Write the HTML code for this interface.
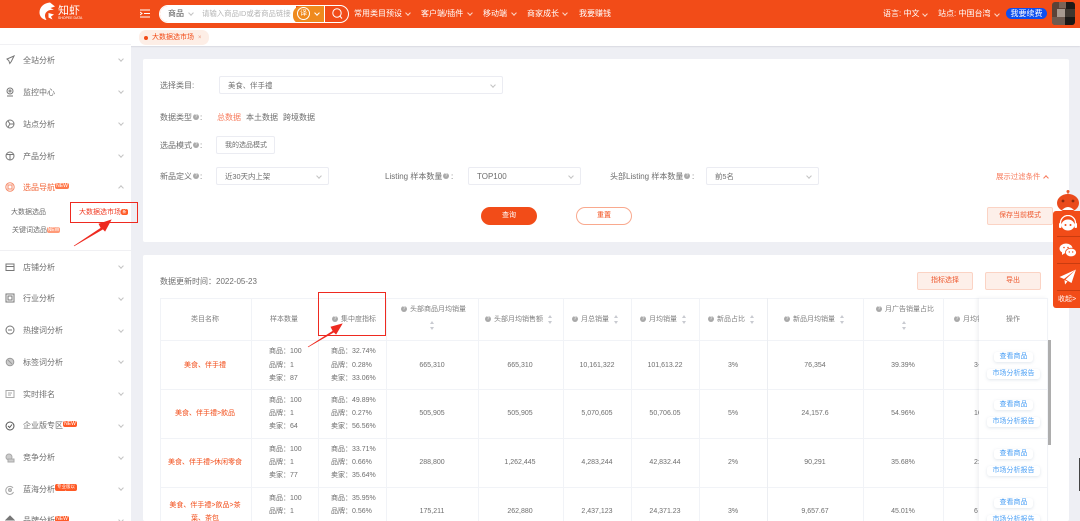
<!DOCTYPE html>
<html lang="zh">
<head>
<meta charset="utf-8">
<title>大数据选市场</title>
<style>
html,body{margin:0;padding:0;width:1080px;height:521px;overflow:hidden;background:#eeeff4}
body{position:relative;font-family:"Liberation Sans","Noto Sans CJK SC",sans-serif;filter:blur(.38px)}
div,span,svg{box-sizing:border-box}
.a{position:absolute}
.t{position:absolute;white-space:nowrap;line-height:10px;font-size:8px;color:#6e6e6e;margin-top:1px}
.f7{font-size:7px}
.f75{font-size:7.4px}
.c{transform:translateX(-50%)}
.w{color:#fff}
.r{color:#f24c18}
.ch{position:absolute;width:4px;height:4px;border-right:1px solid #c4c4c4;border-bottom:1px solid #c4c4c4;transform:rotate(45deg)}
.chw{border-color:#fbd5c6}
.chu{transform:rotate(225deg)}
.sel{position:absolute;background:#fff;border:1px solid #ebecf2;border-radius:2px;height:18px}
.q{position:absolute;width:6px;height:6px;border-radius:50%;background:#a9a9a9;color:#fff;font-size:5px;line-height:6px;text-align:center}
.s{position:absolute;width:5px;height:9px}
.s:before,.s:after{content:"";position:absolute;left:0;border-left:2.5px solid transparent;border-right:2.5px solid transparent}
.s:before{top:0;border-bottom:3px solid #c8cad0}
.s:after{bottom:0;border-top:3px solid #c8cad0}
.vl{position:absolute;top:298px;width:1px;height:223px;background:#f1f3f7}
.hl{position:absolute;left:160px;width:820px;height:1px;background:#f1f3f7}
.h{color:#808080;font-size:7px}
.bg{position:absolute;background:#ff5a26;color:#fff;font-size:5px;line-height:6px;height:6px;border-radius:2px;text-align:center}
.op{position:absolute;background:#fff;border-radius:3px;box-shadow:0 1px 3px rgba(120,140,170,.22);color:#4a9ff5;font-size:7px;line-height:10px;text-align:center;white-space:nowrap}
.ic{position:absolute;left:5px;fill:none;stroke:#777;stroke-width:1}
.btn{position:absolute;height:18px;background:#fdefe9;border:1px solid #fbd3c4;border-radius:2px;color:#ee5a30;font-size:7px;line-height:16px;text-align:center}
</style>
</head>
<body>

<!-- top bar -->
<div class="a" style="left:0;top:0;width:1080px;height:28px;background:#f24c18"></div>
<svg class="a" style="left:38px;top:2px" width="20" height="19" viewBox="0 0 20 19"><path d="M12 .5 C6 1 1.5 5 1.5 10.5 C1.5 14.5 4.5 17.5 8.5 18 C6.5 15 6.5 12 8.5 10 C10 8 13 7.5 16 8 L12.5 6 L17 4.5 Z" fill="#fff"/><path d="M10.5 11 L16 12.5 L13 14.5 L14.5 17.5 L10.5 15.5Z" fill="#fff"/></svg>
<div class="t w" style="left:58px;top:3px;font-size:11px;line-height:14px">知虾</div>
<div class="t w" style="left:58px;top:15px;font-size:3.5px;line-height:5px">SHOPEE DATA</div>
<svg class="a" style="left:140px;top:9px" width="10" height="9" viewBox="0 0 10 9"><path d="M0 1H10M4 4.5H10M0 8H10M0 3L2 4.5L0 6" fill="none" stroke="#fff" stroke-width="1"/></svg>

<div class="a" style="left:159px;top:5px;width:190px;height:18px;border:1px solid #fff;border-radius:9px;overflow:hidden">
  <div class="a" style="left:0;top:0;width:136px;height:18px;background:#fff"></div>
  <div class="a" style="left:133px;top:0;width:31px;height:18px;background:#ef8a1e;border-radius:8px 0 0 8px"></div>
  <div class="a" style="left:164px;top:0;width:1px;height:18px;background:#fff"></div>
</div>
<div class="t" style="left:168px;top:8px;color:#555">商品</div>
<div class="ch" style="left:189px;top:11px"></div>
<div class="t f75" style="left:202px;top:8px;color:#b5b5b5">请输入商品ID或者商品链接</div>
<div class="a" style="left:297px;top:7px;width:13px;height:13px;border:1px solid #fff;border-radius:50%;color:#fff;font-size:7px;line-height:11px;text-align:center">译</div>
<div class="ch chw" style="left:315px;top:11px;border-color:#fff"></div>
<svg class="a" style="left:331px;top:7px" width="13" height="13" viewBox="0 0 13 13"><circle cx="6" cy="6" r="4.2" fill="none" stroke="#fff"/><path d="M9 9.2L11 11.5" stroke="#fff"/></svg>

<div class="t w" style="left:354px;top:8px">常用类目预设</div><div class="ch chw" style="left:406px;top:11px"></div>
<div class="t w" style="left:421px;top:8px">客户端/插件</div><div class="ch chw" style="left:468px;top:11px"></div>
<div class="t w" style="left:483px;top:8px">移动端</div><div class="ch chw" style="left:512px;top:11px"></div>
<div class="t w" style="left:527px;top:8px">商家成长</div><div class="ch chw" style="left:563px;top:11px"></div>
<div class="t w" style="left:579px;top:8px">我要赚钱</div>

<div class="t w" style="left:883px;top:8px">语言: 中文</div><div class="ch chw" style="left:923px;top:12px"></div>
<div class="t w" style="left:938px;top:8px">站点: 中国台湾</div><div class="ch chw" style="left:995px;top:12px"></div>
<div class="a" style="left:1006px;top:8px;width:41px;height:11px;border-radius:6px;background:#0d4ff0;color:#fff;font-size:8px;line-height:11px;text-align:center">我要续费</div>
<div class="a" style="left:1052px;top:2px;width:23px;height:23px;border-radius:3px;background:#5b4338;overflow:hidden">
  <div class="a" style="left:7px;top:0;width:8px;height:6px;background:#7b6357"></div>
  <div class="a" style="left:14px;top:0;width:9px;height:7px;background:#1d1a18"></div>
  <div class="a" style="left:5px;top:7px;width:8px;height:8px;background:#a89a90"></div>
  <div class="a" style="left:13px;top:7px;width:10px;height:8px;background:#3f3730"></div>
  <div class="a" style="left:13px;top:15px;width:10px;height:8px;background:#1b1816"></div>
  <div class="a" style="left:0;top:15px;width:13px;height:8px;background:#6d5a50"></div>
</div>

<!-- tab bar -->
<div class="a" style="left:0;top:28px;width:1080px;height:18px;background:#fff;box-shadow:0 1px 1px #d9dae1"></div>
<div class="a" style="left:139px;top:30px;width:70px;height:15px;border-radius:7px;background:#fdeee6"></div>
<div class="a" style="left:144px;top:36px;width:4px;height:4px;border-radius:50%;background:#f24c18"></div>
<div class="t r f7" style="left:152px;top:32px">大数据选市场</div>
<div class="t" style="left:198px;top:32px;color:#e89b80;font-size:6px">×</div>

<!-- sidebar -->
<div class="a" style="left:0;top:28px;width:131px;height:493px;background:#fff"></div>
<div class="a" style="left:0;top:44px;width:131px;height:1px;background:#f1f1f4"></div>
<div class="a" style="left:0;top:250px;width:131px;height:1px;background:#f0f0f3"></div>

<svg class="ic" style="top:55px" width="10" height="10" viewBox="0 0 10 10"><path d="M9 1L2 4L3.8 5.6L4.8 8.5L6.3 6.5Z"/></svg>
<div class="t" style="left:23px;top:55px">全站分析</div><div class="ch" style="left:119px;top:57px"></div>
<svg class="ic" style="top:87px" width="10" height="10" viewBox="0 0 10 10"><circle cx="5" cy="4" r="3"/><circle cx="5" cy="4" r="1"/><path d="M2 9H8"/></svg>
<div class="t" style="left:23px;top:87px">监控中心</div><div class="ch" style="left:119px;top:89px"></div>
<svg class="ic" style="top:119px" width="10" height="10" viewBox="0 0 10 10"><circle cx="5" cy="5" r="4"/><path d="M3 2L5 5L3 8M5 5H9"/></svg>
<div class="t" style="left:23px;top:119px">站点分析</div><div class="ch" style="left:119px;top:121px"></div>
<svg class="ic" style="top:151px" width="10" height="10" viewBox="0 0 10 10"><circle cx="5" cy="5" r="4"/><path d="M1.5 3.5H8.5M5 3.5V9"/></svg>
<div class="t" style="left:23px;top:151px">产品分析</div><div class="ch" style="left:119px;top:153px"></div>
<svg class="ic" style="top:182px;stroke:#f58a68" width="10" height="10" viewBox="0 0 10 10"><circle cx="5" cy="5" r="4.2"/><rect x="3" y="3" width="4" height="4"/></svg>
<div class="t" style="left:23px;top:182px;color:#f2683c">选品导航</div><div class="bg" style="left:55px;top:183px;width:14px;background:#ff7a4d">NEW</div><div class="ch chu" style="left:119px;top:186px"></div>
<div class="t f7" style="left:11px;top:207px">大数据选品</div>
<div class="t f7" style="left:12px;top:225px">关键词选品</div><div class="bg" style="left:47px;top:227px;width:13px;background:#ff9a78">NEW</div>
<div class="t f7" style="left:79px;top:207px;color:#f03a22">大数据选市场</div><div class="bg" style="left:121px;top:209px;width:7px;height:6px;font-size:4px">新</div>

<svg class="ic" style="top:262px" width="10" height="10" viewBox="0 0 10 10"><path d="M1 2H9V8.5H1ZM1 4.5H9"/></svg>
<div class="t" style="left:23px;top:262px">店铺分析</div><div class="ch" style="left:119px;top:264px"></div>
<svg class="ic" style="top:293px" width="10" height="10" viewBox="0 0 10 10"><path d="M1 1H9V9H1ZM3 3H7V7H3Z"/></svg>
<div class="t" style="left:23px;top:293px">行业分析</div><div class="ch" style="left:119px;top:296px"></div>
<svg class="ic" style="top:325px" width="10" height="10" viewBox="0 0 10 10"><circle cx="5" cy="5" r="4"/><path d="M3 5H7"/></svg>
<div class="t" style="left:23px;top:325px">热搜词分析</div><div class="ch" style="left:119px;top:328px"></div>
<svg class="ic" style="top:357px;stroke:#999" width="10" height="10" viewBox="0 0 10 10"><circle cx="5" cy="5" r="3.8" fill="#ccc"/><path d="M3 3L7 7"/></svg>
<div class="t" style="left:23px;top:357px">标签词分析</div><div class="ch" style="left:119px;top:359px"></div>
<svg class="ic" style="top:389px;stroke:#aaa" width="10" height="10" viewBox="0 0 10 10"><path d="M1 1.5H9V8.5H1ZM3 4H7M3 6H6"/></svg>
<div class="t" style="left:23px;top:389px">实时排名</div><div class="ch" style="left:119px;top:391px"></div>
<svg class="ic" style="top:421px;stroke:#555" width="10" height="10" viewBox="0 0 10 10"><circle cx="5" cy="5" r="4"/><path d="M3 5L4.6 6.5L7 3.5"/></svg>
<div class="t" style="left:23px;top:420px">企业版专区</div><div class="bg" style="left:63px;top:421px;width:14px">NEW</div><div class="ch" style="left:119px;top:423px"></div>
<svg class="ic" style="top:453px;stroke:#aaa" width="10" height="10" viewBox="0 0 10 10"><circle cx="4" cy="4" r="3" fill="#ccc"/><rect x="3" y="6" width="6" height="3" fill="#ccc"/></svg>
<div class="t" style="left:23px;top:452px">竞争分析</div><div class="ch" style="left:119px;top:455px"></div>
<svg class="ic" style="top:485px;stroke:#aaa" width="10" height="10" viewBox="0 0 10 10"><path d="M8 3A4 4 0 1 0 8.5 7"/><circle cx="5" cy="5" r="1.5" fill="#ccc"/></svg>
<div class="t" style="left:23px;top:484px">蓝海分析</div><div class="bg" style="left:55px;top:484px;width:22px;height:7px;font-size:4.5px">专业版以上</div><div class="ch" style="left:119px;top:486px"></div>
<svg class="ic" style="top:515px" width="10" height="10" viewBox="0 0 10 10"><path d="M5 1L9 5H1Z" fill="#777"/></svg>
<div class="t" style="left:23px;top:515px">品牌分析</div><div class="bg" style="left:55px;top:516px;width:14px">NEW</div><div class="ch" style="left:119px;top:518px"></div>

<!-- card 1 -->
<div class="a" style="left:143px;top:59px;width:926px;height:183px;background:#fff;border-radius:2px"></div>
<div class="t" style="left:160px;top:80px">选择类目:</div>
<div class="sel" style="left:219px;top:76px;width:284px"></div>
<div class="t f75" style="left:228px;top:80px">美食、伴手禮</div><div class="ch" style="left:491px;top:83px"></div>

<div class="t" style="left:160px;top:112px">数据类型</div><div class="q" style="left:193px;top:114px">?</div><div class="t" style="left:200px;top:112px">:</div>
<div class="t" style="left:217px;top:112px;color:#f7795a">总数据</div>
<div class="t" style="left:246px;top:112px">本土数据</div>
<div class="t" style="left:283px;top:112px">跨境数据</div>

<div class="t" style="left:160px;top:140px">选品模式</div><div class="q" style="left:193px;top:142px">?</div><div class="t" style="left:200px;top:140px">:</div>
<div class="sel" style="left:216px;top:136px;width:59px"></div>
<div class="t f7" style="left:225px;top:140px">我的选品模式</div>

<div class="t" style="left:160px;top:171px">新品定义</div><div class="q" style="left:193px;top:173px">?</div><div class="t" style="left:200px;top:171px">:</div>
<div class="sel" style="left:216px;top:167px;width:113px"></div>
<div class="t f75" style="left:225px;top:171px">近30天内上架</div><div class="ch" style="left:317px;top:174px"></div>

<div class="t" style="left:385px;top:171px">Listing 样本数量</div><div class="q" style="left:443px;top:173px">?</div><div class="t" style="left:451px;top:171px">:</div>
<div class="sel" style="left:468px;top:167px;width:113px"></div>
<div class="t" style="left:477px;top:171px">TOP100</div><div class="ch" style="left:569px;top:174px"></div>

<div class="t" style="left:610px;top:171px">头部Listing 样本数量</div><div class="q" style="left:684px;top:173px">?</div><div class="t" style="left:692px;top:171px">:</div>
<div class="sel" style="left:706px;top:167px;width:113px"></div>
<div class="t f75" style="left:715px;top:171px">前5名</div><div class="ch" style="left:807px;top:174px"></div>

<div class="t f75" style="left:996px;top:171px;color:#f7795a">展示过滤条件</div><div class="ch chu" style="left:1044px;top:176px;border-color:#f7795a"></div>

<div class="a" style="left:481px;top:207px;width:56px;height:18px;border-radius:9px;background:#f24c18;color:#fff;font-size:7px;line-height:18px;text-align:center">查询</div>
<div class="a" style="left:576px;top:207px;width:56px;height:18px;border-radius:9px;background:#fff;border:1px solid #f9a98e;color:#f24c18;font-size:7px;line-height:16px;text-align:center">重置</div>
<div class="btn" style="left:987px;top:207px;width:66px">保存当前模式</div>

<!-- card 2 -->
<div class="a" style="left:143px;top:255px;width:926px;height:266px;background:#fff;border-radius:2px"></div>
<div class="t" style="left:160px;top:276px">数据更新时间：2022-05-23</div>
<div class="btn" style="left:917px;top:272px;width:56px">指标选择</div>
<div class="btn" style="left:985px;top:272px;width:56px">导出</div>

<!-- table grid -->
<div class="hl" style="top:298px"></div>
<div class="hl" style="top:340px"></div>
<div class="hl" style="top:389px"></div>
<div class="hl" style="top:438px"></div>
<div class="hl" style="top:487px"></div>
<div class="vl" style="left:160px"></div>
<div class="vl" style="left:251px"></div>
<div class="vl" style="left:318px"></div>
<div class="vl" style="left:386px"></div>
<div class="vl" style="left:478px"></div>
<div class="vl" style="left:563px"></div>
<div class="vl" style="left:631px"></div>
<div class="vl" style="left:699px"></div>
<div class="vl" style="left:767px;background:#eceef2"></div>
<div class="vl" style="left:863px"></div>
<div class="vl" style="left:943px"></div>

<!-- header -->
<div class="t c h" style="left:205px;top:314px">类目名称</div>
<div class="t c h" style="left:284px;top:314px">样本数量</div>
<div class="q" style="left:332px;top:316px">?</div><div class="t h" style="left:341px;top:314px">集中度指标</div>
<div class="q" style="left:401px;top:306px">?</div><div class="t h" style="left:410px;top:304px">头部商品月均销量</div><div class="s" style="left:430px;top:321px"></div>
<div class="q" style="left:485px;top:316px">?</div><div class="t h" style="left:494px;top:314px">头部月均销售额</div><div class="s" style="left:548px;top:315px"></div>
<div class="q" style="left:572px;top:316px">?</div><div class="t h" style="left:581px;top:314px">月总销量</div><div class="s" style="left:614px;top:315px"></div>
<div class="q" style="left:640px;top:316px">?</div><div class="t h" style="left:649px;top:314px">月均销量</div><div class="s" style="left:682px;top:315px"></div>
<div class="q" style="left:708px;top:316px">?</div><div class="t h" style="left:717px;top:314px">新品占比</div><div class="s" style="left:750px;top:315px"></div>
<div class="q" style="left:784px;top:316px">?</div><div class="t h" style="left:793px;top:314px">新品月均销量</div><div class="s" style="left:840px;top:315px"></div>
<div class="q" style="left:876px;top:306px">?</div><div class="t h" style="left:885px;top:304px">月广告销量占比</div><div class="s" style="left:902px;top:321px"></div>
<div class="q" style="left:954px;top:316px">?</div><div class="t h" style="left:963px;top:314px">月均销量</div>

<!-- row 1 -->
<div class="t c r f7" style="left:205px;top:360px">美食、伴手禮</div>
<div class="t f7" style="left:269px;top:346px">商品：100</div><div class="t f7" style="left:269px;top:360px">品牌：1</div><div class="t f7" style="left:269px;top:373px">卖家：87</div>
<div class="t f7" style="left:331px;top:346px">商品：32.74%</div><div class="t f7" style="left:331px;top:360px">品牌：0.28%</div><div class="t f7" style="left:331px;top:373px">卖家：33.06%</div>
<div class="t c f7" style="left:432px;top:360px">665,310</div><div class="t c f7" style="left:520px;top:360px">665,310</div><div class="t c f7" style="left:597px;top:360px">10,161,322</div><div class="t c f7" style="left:665px;top:360px">101,613.22</div><div class="t c f7" style="left:733px;top:360px">3%</div><div class="t c f7" style="left:815px;top:360px">76,354</div><div class="t c f7" style="left:903px;top:360px">39.39%</div><div class="t f7" style="left:974px;top:360px">3-</div>

<!-- row 2 -->
<div class="t c r f7" style="left:205px;top:408px">美食、伴手禮&gt;飲品</div>
<div class="t f7" style="left:269px;top:395px">商品：100</div><div class="t f7" style="left:269px;top:408px">品牌：1</div><div class="t f7" style="left:269px;top:421px">卖家：64</div>
<div class="t f7" style="left:331px;top:395px">商品：49.89%</div><div class="t f7" style="left:331px;top:408px">品牌：0.27%</div><div class="t f7" style="left:331px;top:421px">卖家：56.56%</div>
<div class="t c f7" style="left:432px;top:408px">505,905</div><div class="t c f7" style="left:520px;top:408px">505,905</div><div class="t c f7" style="left:597px;top:408px">5,070,605</div><div class="t c f7" style="left:665px;top:408px">50,706.05</div><div class="t c f7" style="left:733px;top:408px">5%</div><div class="t c f7" style="left:815px;top:408px">24,157.6</div><div class="t c f7" style="left:903px;top:408px">54.96%</div><div class="t f7" style="left:974px;top:408px">16</div>

<!-- row 3 -->
<div class="t c r f7" style="left:205px;top:457px">美食、伴手禮&gt;休闲零食</div>
<div class="t f7" style="left:269px;top:444px">商品：100</div><div class="t f7" style="left:269px;top:457px">品牌：1</div><div class="t f7" style="left:269px;top:470px">卖家：77</div>
<div class="t f7" style="left:331px;top:444px">商品：33.71%</div><div class="t f7" style="left:331px;top:457px">品牌：0.66%</div><div class="t f7" style="left:331px;top:470px">卖家：35.64%</div>
<div class="t c f7" style="left:432px;top:457px">288,800</div><div class="t c f7" style="left:520px;top:457px">1,262,445</div><div class="t c f7" style="left:597px;top:457px">4,283,244</div><div class="t c f7" style="left:665px;top:457px">42,832.44</div><div class="t c f7" style="left:733px;top:457px">2%</div><div class="t c f7" style="left:815px;top:457px">90,291</div><div class="t c f7" style="left:903px;top:457px">35.68%</div><div class="t f7" style="left:974px;top:457px">2:</div>

<!-- row 4 -->
<div class="t c r f7" style="left:205px;top:500px">美食、伴手禮&gt;飲品&gt;茶</div>
<div class="t c r f7" style="left:205px;top:513px">葉、茶包</div>
<div class="t f7" style="left:269px;top:493px">商品：100</div><div class="t f7" style="left:269px;top:506px">品牌：1</div>
<div class="t f7" style="left:331px;top:493px">商品：35.95%</div><div class="t f7" style="left:331px;top:506px">品牌：0.56%</div>
<div class="t c f7" style="left:432px;top:506px">175,211</div><div class="t c f7" style="left:520px;top:506px">262,880</div><div class="t c f7" style="left:597px;top:506px">2,437,123</div><div class="t c f7" style="left:665px;top:506px">24,371.23</div><div class="t c f7" style="left:733px;top:506px">3%</div><div class="t c f7" style="left:815px;top:506px">9,657.67</div><div class="t c f7" style="left:903px;top:506px">45.01%</div><div class="t f7" style="left:974px;top:506px">6</div>

<!-- fixed operations column -->
<div class="a" style="left:979px;top:298px;width:69px;height:223px;background:#fff;box-shadow:-2px 0 3px rgba(120,130,150,.1);border-top:1px solid #f1f3f7;border-right:1px solid #f1f3f7"></div>
<div class="a" style="left:979px;top:340px;width:68px;height:1px;background:#f1f3f7"></div>
<div class="a" style="left:979px;top:389px;width:68px;height:1px;background:#f1f3f7"></div>
<div class="a" style="left:979px;top:438px;width:68px;height:1px;background:#f1f3f7"></div>
<div class="a" style="left:979px;top:487px;width:68px;height:1px;background:#f1f3f7"></div>
<div class="t c h" style="left:1013px;top:314px">操作</div>
<div class="op" style="left:994px;top:352px;width:39px">查看商品</div><div class="op" style="left:987px;top:369px;width:53px">市场分析报告</div>
<div class="op" style="left:994px;top:400px;width:39px">查看商品</div><div class="op" style="left:987px;top:417px;width:53px">市场分析报告</div>
<div class="op" style="left:994px;top:449px;width:39px">查看商品</div><div class="op" style="left:987px;top:466px;width:53px">市场分析报告</div>
<div class="op" style="left:994px;top:498px;width:39px">查看商品</div><div class="op" style="left:987px;top:515px;width:53px">市场分析报告</div>

<div class="a" style="left:1048px;top:340px;width:3px;height:105px;background:#adadad"></div>
<div class="a" style="left:1079px;top:458px;width:1px;height:33px;background:#444"></div>

<!-- red annotations -->
<div class="a" style="left:70px;top:202px;width:68px;height:21px;border:1.5px solid #ee2a20"></div>
<div class="a" style="left:318px;top:292px;width:68px;height:44px;border:1.5px solid #ee2a20"></div>
<svg class="a" style="left:0;top:0" width="1080" height="521" viewBox="0 0 1080 521">
  <path d="M74 246 L101 228 L99 224 L111 220 L105 231 L103 229 Z" fill="#ee2a20" stroke="#ee2a20" stroke-width=".7"/>
  <path d="M308 347 L333 331 L331 327 L342 324 L336 334 L334 332 Z" fill="#ee2a20" stroke="#ee2a20" stroke-width=".7"/>
</svg>

<!-- right floating panel -->
<svg class="a" style="left:1055px;top:189px" width="25" height="23" viewBox="0 0 25 23">
  <circle cx="13" cy="2.5" r="1.5" fill="#e8572a"/><path d="M13 3V6" stroke="#e8572a"/>
  <ellipse cx="13" cy="14" rx="11" ry="9" fill="#ea4a1c"/>
  <circle cx="8" cy="12" r="1.4" fill="#8a2a10"/><circle cx="18" cy="12" r="1.4" fill="#8a2a10"/>
  <path d="M7 21 Q13 15 19 21 Z" fill="#fff"/>
</svg>
<div class="a" style="left:1053px;top:211px;width:27px;height:97px;background:#f24c18;border-radius:3px 0 0 3px"></div>
<div class="a" style="left:1057px;top:236px;width:23px;height:1px;background:#c93c10"></div>
<div class="a" style="left:1057px;top:263px;width:23px;height:1px;background:#c93c10"></div>
<div class="a" style="left:1057px;top:290px;width:23px;height:1px;background:#c93c10"></div>
<svg class="a" style="left:1058px;top:215px" width="20" height="18" viewBox="0 0 20 18">
  <path d="M2.5 10 V8 A7.5 7.5 0 0 1 17.5 8 V10" fill="none" stroke="#fff" stroke-width="1.3"/>
  <ellipse cx="10" cy="10" rx="6.5" ry="5.5" fill="#fff"/>
  <rect x="1" y="8" width="2.5" height="5" rx="1" fill="#fff"/><rect x="16.5" y="8" width="2.5" height="5" rx="1" fill="#fff"/>
  <circle cx="7.5" cy="10" r="1" fill="#f24c18"/><circle cx="12.5" cy="10" r="1" fill="#f24c18"/>
</svg>
<svg class="a" style="left:1059px;top:243px" width="18" height="15" viewBox="0 0 18 15">
  <ellipse cx="7" cy="5.5" rx="6.5" ry="5" fill="#fff"/><path d="M3 9L3 12L6 10Z" fill="#fff"/>
  <ellipse cx="12" cy="9.5" rx="5.5" ry="4.3" fill="#fff" stroke="#f24c18" stroke-width=".8"/>
  <circle cx="5" cy="4.5" r=".8" fill="#f24c18"/><circle cx="9" cy="4.5" r=".8" fill="#f24c18"/>
  <circle cx="10.3" cy="9" r=".7" fill="#f24c18"/><circle cx="13.7" cy="9" r=".7" fill="#f24c18"/>
</svg>
<svg class="a" style="left:1059px;top:269px" width="18" height="16" viewBox="0 0 18 16">
  <path d="M17 .5 L.5 8 L5 10 Z" fill="#fff"/><path d="M17 .5 L6.5 10.5 L12.5 14 Z" fill="#fff"/><path d="M5.5 11 L6 15.5 L8.5 12.5Z" fill="#fff"/>
</svg>
<div class="t w f7" style="left:1058px;top:294px">收起&gt;</div>

</body>
</html>
